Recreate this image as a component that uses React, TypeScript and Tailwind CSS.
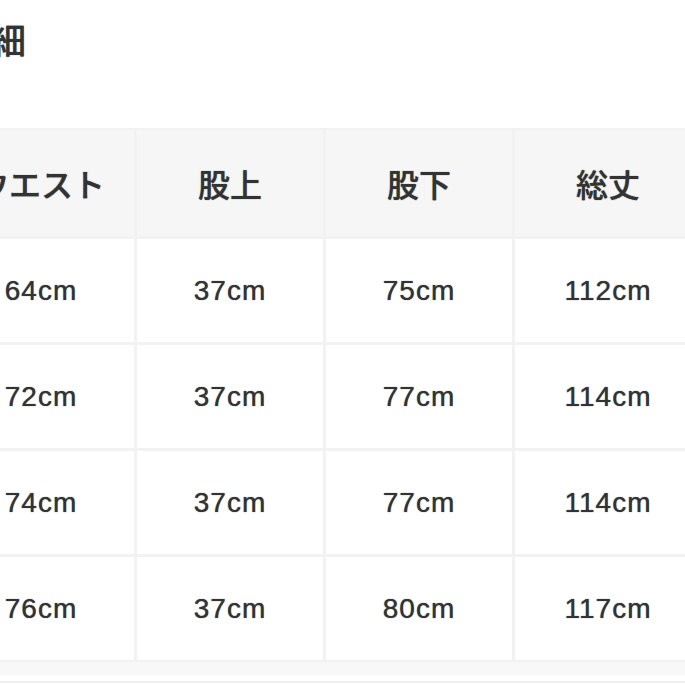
import React from "react";

const headers = ["ウエスト", "股上", "股下", "総丈"];
const rows = [
  ["64cm", "37cm", "75cm", "112cm"],
  ["72cm", "37cm", "77cm", "114cm"],
  ["74cm", "37cm", "77cm", "114cm"],
  ["76cm", "37cm", "80cm", "117cm"],
];

export default function App() {
  return (
    <div className="w-[685px] h-[685px] overflow-hidden bg-white relative">
      <div
        className="ml-[-46px] pt-[20px] h-[128px] text-[36px] leading-none text-[#333] font-medium [text-shadow:0_0_1px_#555]"
        style={{ fontFamily: '"Noto Sans CJK JP", sans-serif' }}
      >
        詳細
      </div>
      <div className="ml-[-52px] w-[760px] bg-[#f2f2f2] pt-[2px] pb-[2px]">
        <div className="grid grid-cols-[186px_186px_186px_186px] gap-[3px]">
          {headers.map((h) => (
            <div
              key={h}
              className="h-[106px] bg-[#f6f6f6] flex items-center justify-center text-[32px] font-medium text-[#333] [text-shadow:0_0_1px_#555]"
              style={{ fontFamily: '"Noto Sans CJK JP", sans-serif' }}
            >
              {h}
            </div>
          ))}
          {rows.map((r, i) =>
            r.map((c, j) => (
              <div
                key={i + "-" + j}
                className="h-[103px] bg-white flex items-center justify-center text-[28px] tracking-[1px] text-[#333] [text-shadow:0_0_1px_#444]"
                style={{ fontFamily: '"Liberation Sans", Arial, sans-serif' }}
              >
                {c}
              </div>
            ))
          )}
        </div>
      </div>
      <div className="ml-[-52px] w-[760px] h-[13px] bg-[#f8f8f8]" />
      <div className="ml-[-52px] w-[760px] h-[8px] bg-white border-b-[2px] border-[#efefef]" />
    </div>
  );
}
